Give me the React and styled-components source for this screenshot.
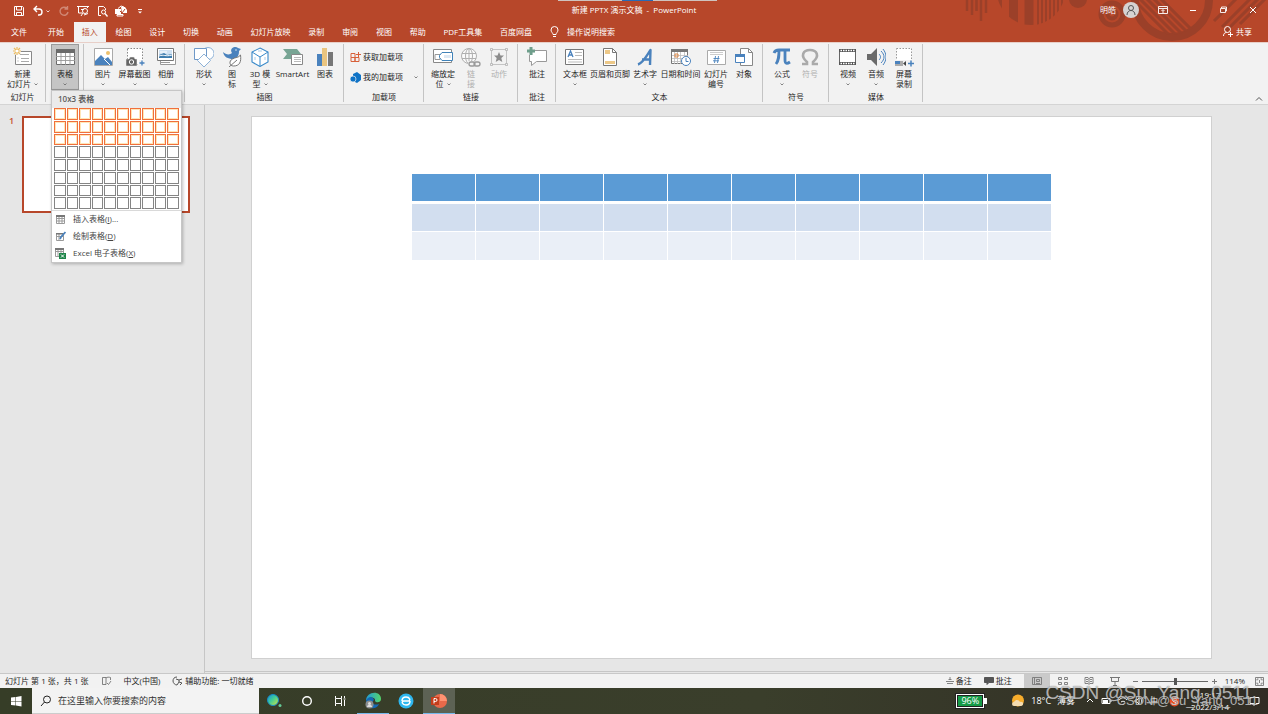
import React, { useState } from 'react';
import styled, { createGlobalStyle, css } from 'styled-components';

const GlobalStyle = createGlobalStyle`
  * { box-sizing: border-box; }
  body { margin: 0; font-family: "Open Sans", "Noto Sans CJK SC", sans-serif; font-size: 8px; line-height: 10px; color: #262626; }
  button, input { font: inherit; color: inherit; }
  button { border: none; background: none; padding: 0; cursor: pointer; }
  svg { display: block; flex: none; }
`;

const Window = styled.div` position: relative; min-height: 100vh; display: flex; flex-direction: column; background: #e6e6e6; overflow: hidden; `;

/* title bar and tabs */
const Header = styled.header` position: relative; background: #b7472a; color: #fff; `;
const Artwork = styled.svg` position: absolute; right: 0; top: 0; `;
const TopStrip = styled.div`
  position: absolute; top: 0; left: 44%; width: 159px; height: 1px;
  background: linear-gradient(to right, #cfc3be 40%, #2a6ab5 40%, #2a6ab5 60%, #cfc3be 60%);
`;
const TitleBar = styled.div` position: relative; display: grid; grid-template-columns: 1fr auto 1fr; align-items: center; height: 21px; `;
const QuickAccess = styled.div` display: flex; align-items: center; gap: 6px; padding: 1px 0 0 12px; `;
const IconButton = styled.button` display: flex; align-items: center; opacity: ${({ $faded }) => ($faded ? 0.35 : 1)}; `;
const UndoPair = styled.div` display: flex; align-items: center; gap: 2px; margin-right: 2px; `;
const Title = styled.h1` margin: 0; font-size: 8px; font-weight: 400; line-height: 18px; padding-bottom: 2px; white-space: pre; `;
const Account = styled.div` display: flex; justify-content: flex-end; align-items: center; gap: 18px; padding: 0 9px 2px 0; `;
const User = styled.button` display: flex; align-items: center; gap: 7px; `;
const WindowButtons = styled.div` display: flex; gap: 18px; `;
const TabBar = styled.div` position: relative; display: flex; align-items: stretch; height: 21px; line-height: 20px; `;
const FileTab = styled.button` padding: 0 11px; line-height: 20px; `;
const Tabs = styled.nav` display: flex; justify-content: space-between; width: 500px; margin-left: 2px; padding-top: 1px; `;
const Tab = styled.button`
  padding: 0 8px; line-height: 18px; white-space: nowrap;
  ${({ $active }) => $active && css` background: #f2f2f2; color: #b7472a; `}
`;
const TellMe = styled.button` display: flex; align-items: center; gap: 8px; margin-left: 10px; `;
const Share = styled.button` display: flex; align-items: center; gap: 3px; margin-left: auto; padding-right: 16px; `;

/* ribbon */
const Ribbon = styled.div`
  position: relative; z-index: 2; display: flex; background: #f2f2f2; padding: 1px 0 2px;
  border-top: 1px solid #e8cfc8; border-bottom: 1px solid #d4d4d4;
`;
const Group = styled.section`
  display: flex; flex-direction: column; padding: ${({ $flush }) => ($flush ? 0 : '0 4px 0 5px')};
  border-right: 1px solid #c4c4c4;
`;
const Tools = styled.div` display: flex; height: 46px; `;
const GroupLabel = styled.div` height: 10px; margin-top: 2px; text-align: center; white-space: nowrap; `;
const ToolWrap = styled.div` position: relative; display: flex; `;
const ToolButton = styled.button`
  display: flex; flex-direction: column; align-items: center; gap: 2px; height: 46px;
  width: ${({ $width }) => $width || 28}px; padding-top: 3px; white-space: nowrap; line-height: 10px;
  color: ${({ disabled }) => (disabled ? '#b0b0b0' : '#262626')};
  ${({ $active }) => $active && css` background: #c5c5c5; box-shadow: inset 0 0 0 1px #9a9a9a; `}
`;
const ToolText = styled.span` display: flex; flex-direction: column; align-items: center; `;
const TextLine = styled.span` display: flex; align-items: center; gap: 3px; height: 10px; `;
const AddIns = styled.div` display: flex; flex-direction: column; gap: 10px; width: 70px; padding: 8px 1px 0; `;
const AddIn = styled.button` display: flex; align-items: center; gap: 2px; height: 10px; white-space: nowrap; `;
const AddInArrow = styled.span` margin-left: auto; `;
const Collapse = styled.button` align-self: flex-end; margin-left: auto; padding-right: 5px; `;

/* table drop-down */
const Menu = styled.div`
  position: absolute; z-index: 5; left: 0; top: 100%; width: 131px; background: #fff;
  border: 1px solid #c6c6c6; box-shadow: 1px 1px 3px rgba(0, 0, 0, 0.25);
`;
const MenuTitle = styled.div` height: 17px; padding-left: 6px; line-height: 15px; background: #ebebeb; color: #5c5c5c; font-weight: 600; `;
const SizeGrid = styled.div` display: grid; grid-template-columns: repeat(10, 1fr); grid-auto-rows: 1fr; gap: 1px; height: 101px; margin: 0 2px 1px; `;
const SizeCell = styled.button`
  border: 1px solid ${({ $on }) => ($on ? '#f0703c' : '#858585')};
  box-shadow: ${({ $on }) => ($on ? 'inset 0 0 0 1px #ffe6b8' : 'none')};
`;
const MenuList = styled.div` border-top: 1px solid #d9d9d9; `;
const MenuItem = styled.button` display: flex; align-items: center; gap: 7px; width: 100%; height: 17px; padding: 0 0 1px 3px; color: #444; `;

/* workspace */
const Workspace = styled.main` flex: 1; display: flex; `;
const Thumbnails = styled.aside` display: flex; align-items: flex-start; width: 205px; padding: 11px 14px 0 9px; border-right: 1px solid #c6c6c6; `;
const SlideNumber = styled.span` width: 13px; font-size: 9px; font-weight: 600; color: #c8502f; `;
const Thumbnail = styled.button` flex: 1; aspect-ratio: 168 / 97; background: #fff; border: 2px solid #b7472a; `;
const Editor = styled.section` flex: 1; padding: 11px 56px 12px 46px; margin-bottom: 1px; border-bottom: 1px solid #c6c6c6; `;
const Slide = styled.article` aspect-ratio: 961 / 543; padding-top: 56px; background: #fff; border: 1px solid #d0d0d0; `;
const SlideTable = styled.table`
  width: 641px; max-width: 90%; margin: 0 auto; border-collapse: collapse; table-layout: fixed;
  th, td { height: 29px; padding: 0; border: 1px solid #fff; }
  th { background: #5b9bd5; border-bottom-width: 3px; }
  td { background: #eaeff7; }
  tr:first-child td { background: #d2deef; }
`;

/* status bar */
const StatusBar = styled.footer` display: flex; justify-content: space-between; height: 15px; background: #f2f2f2; border-top: 1px solid #c8c8c8; `;
const StatusSide = styled.div` display: flex; align-items: center; gap: 12px; padding: 0 4px 0 5px; white-space: nowrap; `;
const StatusButton = styled.button` display: flex; align-items: center; gap: 2px; `;
const ViewTools = styled.div` display: flex; align-self: stretch; gap: 5px; `;
const Views = styled.div` display: flex; `;
const ViewButton = styled.button` display: flex; align-items: center; justify-content: center; width: 26px; background: ${({ $active }) => ($active ? '#cacaca' : 'transparent')}; `;
const Zoom = styled.div` display: flex; align-items: center; gap: 4px; `;
const ZoomRange = styled.input`
  appearance: none; width: 66px; height: 9px; margin: 0; background: linear-gradient(#666, #666) center / 100% 1px no-repeat;
  &::-webkit-slider-thumb { appearance: none; width: 3px; height: 7px; background: #555; }
`;
const ZoomValue = styled.output` margin: 0 6px 0 4px; `;

/* taskbar */
const Taskbar = styled.footer` display: flex; align-items: stretch; height: 26px; background: linear-gradient(to right, #363d27, #3a3e2b 60%, #312d25); color: #fff; `;
const StartButton = styled.button` display: flex; align-items: center; justify-content: center; width: 32px; `;
const SearchBox = styled.label` display: flex; align-items: center; gap: 7px; width: 227px; padding-left: 8px; background: #f3f3f3; border-bottom: 1px solid #ccc; color: #222; `;
const SearchInput = styled.input`
  flex: 1; min-width: 0; padding: 0; border: none; outline: none; background: transparent; font-size: 9px;
  &::placeholder { color: #333; opacity: 1; }
`;
const Pinned = styled.div` display: flex; gap: 1px; margin-left: -1px; `;
const TaskButton = styled.button`
  display: flex; align-items: center; justify-content: center; width: 32px;
  background: ${({ $active }) => ($active ? '#5d6254' : 'transparent')};
  border-bottom: 1px solid ${({ $open }) => ($open ? '#76b9ed' : 'transparent')};
`;
const Tray = styled.div` display: flex; align-items: center; gap: 6px; margin-left: auto; padding-right: 8px; white-space: nowrap; `;
const Battery = styled.div`
  position: relative; width: 28px; height: 14px; margin-right: 21px; border: 1px solid #fff; line-height: 10px;
  outline: 1px solid #222; background: #169b48; box-shadow: inset 0 0 0 1px #222; text-align: center; font-size: 9px; padding-top: 1px;
  &::after { content: ''; position: absolute; right: -4px; top: 3px; width: 3px; height: 6px; background: #fff; }
`;
const Weather = styled.div` display: flex; align-items: center; gap: 6px; margin-right: 4px; font-size: 9px; `;
const InputMode = styled.button` margin-right: 5px; `;
const Clock = styled.time` display: flex; flex-direction: column; align-items: center; line-height: 12px; margin: 0 14px 0 5px; `;
const Watermark = styled.div`
  position: absolute; z-index: 6; right: ${({ $small }) => ($small ? 10 : 16)}px; bottom: ${({ $small }) => ($small ? 5 : 10)}px;
  font-family: "Liberation Sans", Arial, sans-serif; font-size: ${({ $small }) => ($small ? 13 : 19)}px;
  line-height: ${({ $small }) => ($small ? 16 : 22)}px; color: rgba(255, 255, 255, 0.62); pointer-events: none;
  text-shadow: 0 0 1px rgba(60, 60, 60, 0.8);
`;

const G = '#6b6b6b';
const B = '#4a82bd';

const Svg = ({ w = 20, h = w, box = `0 0 ${w} ${h}`, children }) => (
  <svg width={w} height={h} viewBox={box} fill="none" stroke="currentColor" aria-hidden="true">{children}</svg>
);

const Arrow = () => (
  <Svg w={4} h={3}><path d="M.5.5 2 2 3.5.5" stroke="#666" strokeWidth=".8" /></Svg>
);

const icons = {
  newSlide: <Svg><path d="M2.500 4.500H18.500V17.500H2.500Z" fill="#fff" stroke="#888" /><path d="M7 7.500h9M8 11.500h8M8 14.500h8" stroke="#aaa" /><path d="M5 10.500v1M5 13.500v1" stroke="#999" /><circle cx="4" cy="4" r="4" fill="#f2f2f2" stroke="none" /><path d="M4 0v8M0 4h8M1 1l6 6M7 1 1 7" stroke="#edbc5e" strokeWidth="1.200" /><circle cx="4" cy="4" r="1.600" fill="#fff" stroke="none" /></Svg>,
  table: <Svg><path d="M1.500 2.500h18v15h-18Z" fill="#fff" stroke={G} /><path d="M1 2h19v4H1Z" fill={G} stroke="none" /><path d="M1 9.500h19M1 13.500h19M6 6v12M10.500 6v12M15 6v12" stroke="#999" strokeWidth=".9" /></Svg>,
  picture: <Svg><path d="M1.500 1.500h18v17h-18Z" fill="#fff" stroke="#aaa" /><circle cx="15" cy="6" r="2" fill="#edc16d" stroke="none" /><path d="M2 18v-4l6-6 10 10ZM12 12l3-2 4 5v3h-2Z" fill={B} stroke="none" /><path d="m11 12 6 6" stroke="#fff" /></Svg>,
  screenshot: <Svg><path d="M2.500 1.500h15v16h-15Z" fill="#fff" stroke="#888" strokeDasharray="1.500 1.500" /><path d="M1 12h3l1-2h4l1 2h2v7H1Z" fill="#666" stroke="#f2f2f2" strokeWidth=".5" /><circle cx="6.500" cy="15" r="2.200" stroke="#fff" /><path d="M14 13h6v7h-6Z" fill="#f2f2f2" stroke="none" /><path d="M17 13.500v5M14.500 16h5" stroke={B} strokeWidth="1.300" /></Svg>,
  album: <Svg><path d="M4.500 5.500h15v12h-15Z" fill="#fff" stroke="#999" /><path d="M1.500 1.500h16v12h-16Z" fill="#fff" stroke="#777" /><path d="M3 3h13v8H3Z" fill="#cfe1f2" stroke="none" /><path d="M3 11V8l5-2 3 2 5-1v4Z" fill="#3d7cae" stroke="none" /><path d="M4 5h7M3 9c5-2 6 1 13-1" stroke="#fff" /><path d="M4 15.500h10" stroke="#999" /></Svg>,
  shapes: <Svg><circle cx="14" cy="6.500" r="6" stroke="#8db1d7" fill="#fff" /><path d="M.5 1.500h12v11H.5Z" fill="#fff" stroke="#6f99c8" /><path d="m10 7 6.500 6.500L10 20l-6.500-6.500Z" fill="#fff" stroke="#8db1d7" /></Svg>,
  bird: <Svg><path d="M1 5c3 3 7 3 9 1-3-4 2-8 6-5l3 1-2 2c0 4-1 7-6 8-5 0-9-2-10-7Z" fill={B} stroke="none" /><circle cx="14" cy="3" r=".7" fill="#fff" stroke="none" /><path d="M18.500 8c1 7-1 11-7 11-4 0-5-5-1-7 3-2 6-1 8-4Z" fill="#fff" stroke="#777" /><path d="m7 20 8-7" stroke="#777" /></Svg>,
  cube: <Svg><path d="m10 1 8 4v10l-8 4.500L2 15V5Z" fill="#fff" stroke="#3889c9" strokeWidth="1.100" /><path d="m2 5 8 5 8-5M10 10v9" stroke="#3889c9" /><path d="m5 10 0 3M15 10v3M8 4l4 0" stroke="#a9cde9" /></Svg>,
  smartArt: <Svg><path d="M0 2h14l4 5-4 5H0l4-5Z" fill="#78a594" stroke="none" /><path d="M8.500 7.500h11v10h-11Z" fill="#fff" stroke="#888" /><path d="M11 10.500h7M11 12.500h7M11 14.500h7" stroke="#bbb" /></Svg>,
  chart: <Svg><path d="M2 7h5v12H2Z" fill={B} stroke="none" /><path d="M7 1h5v18H7Z" fill="#eac580" stroke="none" /><path d="M13 5h5v14h-5Z" fill="#777" stroke="none" /></Svg>,
  zoomTo: <Svg><path d="M.5 2.500h18v13H.5Z" fill="#fff" stroke="#888" /><path d="M2 7.500h5v5H2Z" stroke="#999" /><path d="M9 5.500h10.500v8H9L6.500 10.500v-2Z" fill="#fff" stroke="#4083b9" /><path d="M11 8h7v3h-7Z" fill="#dce8f3" stroke="none" /></Svg>,
  link: <Svg><circle cx="8" cy="9" r="7.500" fill="#fafafa" /><ellipse cx="8" cy="9" rx="3.500" ry="7.500" /><path d="M1 6.500h14M1 11.500h14M8 2v14" /><path d="M7 14h13v6H7Z" fill="#f2f2f2" stroke="none" /><rect x="8" y="15" width="6" height="4" rx="2" strokeWidth="1.300" stroke="#999" /><rect x="13" y="15" width="6" height="4" rx="2" strokeWidth="1.300" stroke="#999" /></Svg>,
  action: <Svg><path d="M2.500 2.500h15v15h-15Z" stroke="#c4c4c4" /><path d="M1.500 1.500h2v2h-2ZM16.500 1.500h2v2h-2ZM1.500 16.500h2v2h-2ZM16.500 16.500h2v2h-2Z" fill="#f2f2f2" stroke="#aaa" strokeWidth=".7" /><path d="m10 5 1.500 3.500h3.500l-2.700 2.500 1 4-3.300-2-3.300 2 1-4L5 8.500h3.500Z" fill="#8c8c8c" stroke="none" /></Svg>,
  comment: <Svg><path d="M2.500 3.500h17v11h-10l-5 4v-4h-2Z" fill="#fff" stroke="#999" /><path d="M4 0v8M0 4h8" stroke="#f2f2f2" strokeWidth="4" /><path d="M4 0v8M0 4h8" stroke="#6e9e8b" strokeWidth="3" /></Svg>,
  textBox: <Svg><path d="M.5 2.500h18v15H.5Z" fill="#fff" stroke="#777" /><path d="m3 10 2.500-6L8 10M4 8h3" stroke={B} strokeWidth="1.300" /><path d="M10 5.500h7M10 8.500h7M3 12.500h14M3 15h14" stroke="#bbb" /></Svg>,
  headerFooter: <Svg><path d="M3.500 1.500h9l4 4v13h-13Z" fill="#fff" stroke="#777" /><path d="M12.500 1.500v4h4" stroke="#777" /><path d="M5 3h5v4H5ZM5 14h10v3H5Z" fill="#edc887" stroke="none" /></Svg>,
  wordArt: <Svg><path d="M3 17.500C8 16 12 8 15.500 3L15 18M7 12.500h9" stroke={B} strokeWidth="2.400" strokeLinejoin="round" /></Svg>,
  dateTime: <Svg><path d="M.5 2.500h16v14H.5Z" fill="#fff" stroke="#777" /><path d="M0 2h17v3H0Z" fill="#777" stroke="none" /><path d="M1 8.500h16M1 11.500h16M1 14.500h16M3.500 5v12M6.500 5v12M9.500 5v12M13.500 5v12" stroke="#bbb" strokeWidth=".8" /><path d="M4 7h3v3H4Z" stroke="#e08a49" /><circle cx="15" cy="14" r="4.500" fill="#fff" stroke={B} /><path d="M15 11v3.500h2.500" stroke={B} /></Svg>,
  slideNumber: <Svg><path d="M1.500 3.500h18v14h-18Z" fill="#fff" stroke="#aaa" /><path d="M4 5.500h13M4 7.500h13" stroke="#ccc" /><path d="m9.500 9-1 7M12.500 9l-1 7M7.500 11.500h6M7 13.800h6" stroke={B} strokeWidth=".9" /></Svg>,
  object: <Svg><path d="M6.500 1.500h8l4 4v13h-12Z" fill="#fff" stroke="#888" /><path d="M14.500 1.500v4h4" stroke="#888" /><path d="M1.500 7.500h9v8h-9Z" fill="#fff" stroke={B} /><path d="M1 7h10v3H1Z" fill={B} stroke="none" /></Svg>,
  formula: <Svg><path d="M2 6c1-3 3-3 5-3h11M7 3c0 6 0 10-3 14M13 3v10c0 4 2 4 5 2" stroke={B} strokeWidth="2.800" /></Svg>,
  symbol: <Svg><path d="M2 17h5v-2C0 9 3 3 10 3s10 6 3 12v2h5" stroke="#aaa" strokeWidth="2.600" /></Svg>,
  video: <Svg><path d="M1.500 2.500h16v15h-16Z" fill="#fff" stroke="#666" /><path d="M1 3.500h17M1 16.500h17" stroke="#555" strokeWidth="3" /><path d="M2.500 3.500h14M2.500 16.500h14" stroke="#fff" strokeWidth="1.500" strokeDasharray="1.500 1" /></Svg>,
  audio: <Svg><path d="M1 7h4l6-6v18l-6-6H1Z" fill="#6a6a6a" stroke="none" /><path d="M13 7c2 2 2 4 0 6M15 4c4 4 4 8 0 12M17 2c4 5 4 11 0 16" stroke={B} /></Svg>,
  record: <Svg><path d="M2.500 1.500h15v14h-15Z" fill="#fff" stroke="#999" strokeDasharray="1.500 1.500" /><path d="M0 13h20v7H0Z" fill="#f2f2f2" stroke="none" /><path d="M1 14h8v5H1Z" fill="#aaa" stroke="none" /><path d="M1 14h5v3H1Z" fill={B} stroke="none" /><path d="m9 16.500 3-2.500v5Z" fill="#444" stroke="none" /><path d="M17 13.500v6M14 16.500h6" stroke={B} strokeWidth="1.500" /></Svg>,
};

const tabs = ['开始', '插入', '绘图', '设计', '切换', '动画', '幻灯片放映', '录制', '审阅', '视图', '帮助', 'PDF工具集', '百度网盘'];
const columns = Array.from({ length: 10 }, (_, i) => i);

const groupsAfterTable = [
  { id: 'images', label: '', tools: [
    { icon: 'picture', lines: ['图片'], arrow: true },
    { icon: 'screenshot', lines: ['屏幕截图'], arrow: true, width: 35 },
    { icon: 'album', lines: ['相册'], arrow: true },
  ] },
  { id: 'illustrations', label: '插图', tools: [
    { icon: 'shapes', lines: ['形状'], arrow: true },
    { icon: 'bird', lines: ['图', '标'] },
    { icon: 'cube', lines: ['3D 模', '型'], arrow: true },
    { icon: 'smartArt', lines: ['SmartArt'], width: 37 },
    { icon: 'chart', lines: ['图表'] },
  ] },
  { id: 'addins', label: '加载项' },
  { id: 'links', label: '链接', tools: [
    { icon: 'zoomTo', lines: ['缩放定', '位'], arrow: true },
    { icon: 'link', lines: ['链', '接'], disabled: true },
    { icon: 'action', lines: ['动作'], disabled: true },
  ] },
  { id: 'comments', label: '批注', tools: [{ icon: 'comment', lines: ['批注'] }] },
  { id: 'text', label: '文本', tools: [
    { icon: 'textBox', lines: ['文本框'], arrow: true },
    { icon: 'headerFooter', lines: ['页眉和页脚'], width: 42 },
    { icon: 'wordArt', lines: ['艺术字'], arrow: true },
    { icon: 'dateTime', lines: ['日期和时间'], width: 43 },
    { icon: 'slideNumber', lines: ['幻灯片', '编号'] },
    { icon: 'object', lines: ['对象'] },
  ] },
  { id: 'symbols', label: '符号', tools: [
    { icon: 'formula', lines: ['公式'], arrow: true },
    { icon: 'symbol', lines: ['符号'], disabled: true },
  ] },
  { id: 'media', label: '媒体', tools: [
    { icon: 'video', lines: ['视频'], arrow: true },
    { icon: 'audio', lines: ['音频'], arrow: true },
    { icon: 'record', lines: ['屏幕', '录制'] },
  ] },
];

const Tool = ({ icon, lines, arrow, width, disabled, active, onClick }) => (
  <ToolButton $width={width} $active={active} disabled={disabled} onClick={onClick}>
    {icons[icon]}
    <ToolText>
      {lines.map((line, i) => (
        <TextLine key={line}>
          {line}
          {arrow && lines.length > 1 && i === lines.length - 1 && <Arrow />}
        </TextLine>
      ))}
      {arrow && lines.length === 1 && <TextLine><Arrow /></TextLine>}
    </ToolText>
  </ToolButton>
);

const AddInTools = () => (
  <AddIns>
    <AddIn>
      <Svg w={11}><path d="M1 1.500h4v4H1ZM1 5.500h4v4H1ZM5 5.500h4v4H5Z" stroke="#d8603a" /><path d="M8.500 0v5M6 2.500h5" stroke="#d8603a" /></Svg>
      获取加载项
    </AddIn>
    <AddIn>
      <Svg w={11}><path d="M3 2 7 0l4 3v5L7 11 3 9Z" fill="#0f73c6" stroke="none" /><circle cx="3" cy="7" r="3" fill="#0f73c6" stroke="#f2f2f2" strokeWidth=".7" /></Svg>
      我的加载项
      <AddInArrow><Arrow /></AddInArrow>
    </AddIn>
  </AddIns>
);

const TableMenu = () => {
  const [size, setSize] = useState({ cols: 10, rows: 3 });
  const cells = Array.from({ length: 80 }, (_, i) => ({ col: (i % 10) + 1, row: Math.floor(i / 10) + 1 }));
  return (
    <Menu>
      <MenuTitle>{size.cols}x{size.rows} 表格</MenuTitle>
      <SizeGrid>
        {cells.map(({ col, row }) => (
          <SizeCell
            key={`${col}-${row}`}
            aria-label={`${col}x${row}`}
            $on={col <= size.cols && row <= size.rows}
            onClick={() => setSize({ cols: col, rows: row })}
          />
        ))}
      </SizeGrid>
      <MenuList>
        <MenuItem>
          <Svg w={11}><path d="M1.500 1.500h8v8h-8ZM1 4.500h9M1 7h9M4 2v8M7 2v8" stroke="#999" fill="#fff" /><path d="M1 1h9v2H1Z" fill="#777" stroke="none" /></Svg>
          <span>插入表格(<u>I</u>)...</span>
        </MenuItem>
        <MenuItem>
          <Svg w={11}><path d="M1.500 2.500h7v7h-7ZM1 5.500h8M4 2v8" stroke="#999" fill="#fff" /><path d="M1 2h7v1.500H1Z" fill="#777" stroke="none" /><path d="M10.500 1 6 6l-1 2" stroke={B} strokeWidth="1.800" /></Svg>
          <span>绘制表格(<u>D</u>)</span>
        </MenuItem>
        <MenuItem>
          <Svg w={11}><path d="M.5.500h8v8h-8ZM0 3.500h9M3 1v8M6 1v8" stroke="#999" fill="#fff" /><path d="M0 0h9v2H0Z" fill="#777" stroke="none" /><path d="M4 5h7v6H4Z" fill="#1e8449" stroke="none" /><path d="m6 6.500 3 3M9 6.500l-3 3" stroke="#fff" /></Svg>
          <span>Excel 电子表格(<u>X</u>)</span>
        </MenuItem>
      </MenuList>
    </Menu>
  );
};

const HeaderArt = () => (
  <Artwork width="308" height="42" viewBox="0 0 308 42" fill="none" stroke="#9b4029" aria-hidden="true">
    <clipPath id="disc"><circle cx="71" cy="-9" r="34" /></clipPath>
    <clipPath id="ring"><circle cx="212" cy="0" r="35" /></clipPath>
    <path d="M7 0v11M12 0v15M16.500 0v11M21 0v21M26 0v13" strokeWidth="2.500" />
    <g clipPath="url(#disc)">
      <path d="M39.500 0v26" strokeWidth="5" />
      <path d="M53.500 0v26M69 0v26" strokeWidth="9" />
      <path d="M78 0v26M82 0v26M86 0v26M90 0v26M94 0v26M98 0v26M102 0v26" strokeWidth="2" />
    </g>
    <circle cx="118" cy="-1" r="9" fill="#9b4029" stroke="none" />
    <circle cx="152" cy="14" r="11" strokeWidth="5" />
    <circle cx="152" cy="14" r="4.500" strokeWidth="4" />
    <circle cx="212" cy="0" r="37" strokeWidth="8" />
    <g clipPath="url(#ring)" strokeWidth="3">
      <path d="m170-4 40 40M177-4l40 40M184-4l40 40M191-4l40 40M198-4l40 40" />
    </g>
    <path d="m262 27 30-30M266 31l35-35M280 24l28-28M254 21l24-24" strokeWidth="3" />
  </Artwork>
);

const App = () => {
  const [menuOpen, setMenuOpen] = useState(true);
  const [activeTab, setActiveTab] = useState('插入');
  const [zoom, setZoom] = useState(114);

  return (
    <Window>
      <GlobalStyle />
      <Header>
        <HeaderArt />
        <TopStrip />
        <TitleBar>
          <QuickAccess>
            <IconButton aria-label="保存"><Svg w={14} h={12}><path d="M2.500 1.500h8l1 1v8h-9ZM4.500 2v3h5V2M4.500 10.500V7.500h5v3" /></Svg></IconButton>
            <UndoPair>
              <IconButton aria-label="撤消"><Svg w={12}><path d="M5 1 2 4l3 3M2 4h5a3 3 0 0 1 0 6H6" strokeWidth="1.400" /></Svg></IconButton>
              <Svg w={4} h={3}><path d="M.5.500 2 2 3.500.500" strokeWidth=".8" /></Svg>
            </UndoPair>
            <IconButton $faded aria-label="恢复"><Svg w={12}><path d="M9 3.500A4 4 0 1 0 10 7M9.500 1v3h-3" strokeWidth="1.400" /></Svg></IconButton>
            <IconButton aria-label="从头开始"><Svg w={14} h={12}><path d="M1 1.500h12M2.500 2v6h4M5 11l2-3M5 4.500h3M11.500 2v1" /><circle cx="9" cy="6" r="2.500" /><path d="m8 10 4-1.500" /></Svg></IconButton>
            <IconButton aria-label="打印预览"><Svg w={12}><path d="M5 10.500H2.500v-9h5l2 2V5" /><circle cx="7.500" cy="7" r="2" /><path d="m9 8.500 2.500 3" strokeWidth="1.300" /></Svg></IconButton>
            <IconButton aria-label="快速打印"><Svg w={14} h={12}><path d="M1 4h6v5H1ZM7 2h4l2 3v3H8Z" fill="currentColor" stroke="none" /><path d="M4 3.500 7 1l3 1M3 9.500h6V11H3Z" /><path d="m6 6 2 2 3-4" stroke="#b7472a" /></Svg></IconButton>
            <IconButton aria-label="自定义"><Svg w={12}><path d="M4 4.500h4" /><path d="M4 6.500h4L6 8.500Z" fill="currentColor" stroke="none" /></Svg></IconButton>
          </QuickAccess>
          <Title>新建 PPTX 演示文稿  -  PowerPoint</Title>
          <Account>
            <User>
              明皓
              <Svg w={16}><circle cx="8" cy="8" r="8" fill="#d6d3d2" stroke="none" /><circle cx="8" cy="6" r="2.500" stroke="#555" /><path d="M4 13c0-6 8-6 8 0" stroke="#555" /></Svg>
            </User>
            <WindowButtons>
              <IconButton aria-label="功能区显示选项"><Svg w={12}><path d="M1.500 2.500h9v7h-9ZM2 4.500h8M6 9V6M4.500 7 6 5.500 7.500 7" strokeWidth=".9" /></Svg></IconButton>
              <IconButton aria-label="最小化"><Svg w={12}><path d="M3 6.500h6" /></Svg></IconButton>
              <IconButton aria-label="还原"><Svg w={12}><path d="M3.500 4.500h5v4h-5ZM4.500 4V3h5v4h-1" strokeWidth=".9" /></Svg></IconButton>
              <IconButton aria-label="关闭"><Svg w={12}><path d="m3 3 6 6M9 3 3 9" /></Svg></IconButton>
            </WindowButtons>
          </Account>
        </TitleBar>
        <TabBar>
          <FileTab>文件</FileTab>
          <Tabs>
            {tabs.map((tab) => (
              <Tab key={tab} $active={tab === activeTab} onClick={() => setActiveTab(tab)}>{tab}</Tab>
            ))}
          </Tabs>
          <TellMe>
            <Svg w={9} h={12}><path d="M3 8.500C3 7 1 6 1 4a3.500 3.500 0 0 1 7 0c0 2-2 3-2 4.500ZM3 10.500h3" /></Svg>
            操作说明搜索
          </TellMe>
          <Share>
            <Svg w={10} h={11}><circle cx="4.500" cy="3.500" r="3" /><path d="M.5 10c0-2 1-3.500 3-3.500M7.500 6v5M5 8.500h5" /></Svg>
            共享
          </Share>
        </TabBar>
      </Header>

      <Ribbon>
        <Group $flush>
          <Tools><Tool icon="newSlide" lines={['新建', '幻灯片']} arrow width={45} /></Tools>
          <GroupLabel>幻灯片</GroupLabel>
        </Group>
        <Group>
          <Tools>
            <ToolWrap>
              <Tool icon="table" lines={['表格']} arrow active={menuOpen} onClick={() => setMenuOpen(!menuOpen)} />
              {menuOpen && <TableMenu />}
            </ToolWrap>
          </Tools>
        </Group>
        {groupsAfterTable.map((group) => (
          <Group key={group.id}>
            <Tools>
              {group.tools ? group.tools.map((tool) => <Tool key={tool.icon} {...tool} />) : <AddInTools />}
            </Tools>
            <GroupLabel>{group.label}</GroupLabel>
          </Group>
        ))}
        <Collapse aria-label="折叠功能区"><Svg w={8} h={6}><path d="m1 4.500 3-3 3 3" stroke="#555" /></Svg></Collapse>
      </Ribbon>

      <Workspace>
        <Thumbnails>
          <SlideNumber>1</SlideNumber>
          <Thumbnail aria-label="幻灯片 1" />
        </Thumbnails>
        <Editor>
          <Slide>
            <SlideTable>
              <thead>
                <tr>{columns.map((c) => <th key={c} />)}</tr>
              </thead>
              <tbody>
                {[1, 2].map((row) => (
                  <tr key={row}>{columns.map((c) => <td key={c} />)}</tr>
                ))}
              </tbody>
            </SlideTable>
          </Slide>
        </Editor>
      </Workspace>

      <StatusBar>
        <StatusSide>
          <span>幻灯片 第 1 张，共 1 张</span>
          <Svg w={11} h={10}><path d="M5 8.500H1.500v-7H5V8ZM5 2c1-1 3-1 4.500-.5V4M6 7l1.500 1.500L10 5" stroke="#666" strokeWidth=".8" /></Svg>
          <span>中文(中国)</span>
          <StatusButton>
            <Svg w={11} h={10}><path d="M5 1C2 1 1 3 1 5s2 4 4 4M4 3l3 1 3-1M7 4v2L5 9M7 6l3 1-2 2" stroke="#555" /></Svg>
            辅助功能: 一切就绪
          </StatusButton>
        </StatusSide>
        <StatusSide>
          <StatusButton><Svg w={8} h={8}><path d="M0 4.500h8M1 6.500h6M4 0v3M2.500 2.500h3" stroke="#777" strokeWidth=".9" /></Svg>备注</StatusButton>
          <StatusButton><Svg w={10}><path d="M.5 1.500h9v5H5l-2 2v-2H.5Z" fill="#555" stroke="#555" /></Svg>批注</StatusButton>
          <ViewTools>
            <Views>
              <ViewButton $active aria-label="普通视图"><Svg w={10}><path d="M.5 1.500h9v7h-9ZM2.500 2v6M4.500 3.500h3v2h-3ZM4 7.500h4" stroke="#777" strokeWidth=".9" /></Svg></ViewButton>
              <ViewButton aria-label="幻灯片浏览"><Svg w={10}><path d="M.5 1.500h3v2h-3ZM6.500 1.500h3v2h-3ZM.5 6.500h3v2h-3ZM6.500 6.500h3v2h-3Z" stroke="#777" strokeWidth=".9" /></Svg></ViewButton>
              <ViewButton aria-label="阅读视图"><Svg w={10}><path d="M1 1.500h3l1 1 1-1h3v6H6l-1 1-1-1H1ZM5 2v6M2 3.500h2M2 5.500h2M6 3.500h2M6 5.500h2" stroke="#777" strokeWidth=".9" /></Svg></ViewButton>
              <ViewButton aria-label="幻灯片放映"><Svg w={10}><path d="M0 1.500h10M1.500 2v3.500h7V2M5 6v3M3 9.500h4" stroke="#777" /></Svg></ViewButton>
            </Views>
            <Zoom>
              <IconButton aria-label="缩小"><Svg w={5}><path d="M0 2.500h5" stroke="#777" /></Svg></IconButton>
              <ZoomRange type="range" min="10" max="210" value={zoom} aria-label="缩放" onChange={(e) => setZoom(Number(e.target.value))} />
              <IconButton aria-label="放大"><Svg w={5}><path d="M0 2.500h5M2.500 0v5" stroke="#777" /></Svg></IconButton>
              <ZoomValue>{zoom}%</ZoomValue>
              <IconButton aria-label="适应窗口"><Svg w={9}><path d="M.5.500h8v8h-8ZM2 3.500V2h1.500M5.500 2H7v1.500M7 5.500V7H5.500M3.500 7H2V5.500M4.500 3v3" stroke="#777" strokeWidth=".9" /></Svg></IconButton>
            </Zoom>
          </ViewTools>
        </StatusSide>
      </StatusBar>

      <Taskbar>
        <StartButton aria-label="开始菜单"><Svg w={12}><path d="M1 2.500 5.500 2v4H1ZM6 2l5.500-1v5H6ZM1 6.500h4.500v4L1 10ZM6 6.500h5.500v5L6 10.500Z" fill="#fff" stroke="none" /></Svg></StartButton>
        <SearchBox>
          <Svg w={11} h={12}><circle cx="7" cy="4.500" r="3.500" /><path d="M4.500 7 1 11" /></Svg>
          <SearchInput placeholder="在这里输入你要搜索的内容" aria-label="搜索" />
        </SearchBox>
        <Pinned>
          <TaskButton aria-label="资讯">
            <svg width="16" height="14" viewBox="0 0 16 14">
              <defs><linearGradient id="news" x1="0" x2="1" y1="0" y2="1"><stop stopColor="#128fe0" /><stop offset=".45" stopColor="#40cc97" /><stop offset="1" stopColor="#d7ea3d" /></linearGradient></defs>
              <circle cx="7" cy="6" r="5.500" fill="url(#news)" stroke="#178bc7" /><circle cx="14" cy="11.500" r="1.500" fill="#63c995" />
            </svg>
          </TaskButton>
          <TaskButton aria-label="Cortana"><Svg w={12}><circle cx="6" cy="6" r="4.300" strokeWidth="1.400" /></Svg></TaskButton>
          <TaskButton aria-label="任务视图"><Svg w={12}><path d="M1.500 1v2.500h6V1M1.500 11V8.500h6V11M1.500 3.500v5M7.500 3.500v5M10.500 1v2M10.500 5v6" /><path d="M9.500 4h2" /></Svg></TaskButton>
          <TaskButton $open aria-label="Edge">
            <svg width="17" height="17" viewBox="0 0 17 17">
              <defs><linearGradient id="edge" x1="0" x2="1"><stop stopColor="#209bd8" /><stop offset="1" stopColor="#55d66b" /></linearGradient></defs>
              <path d="M1 9C1-1 16-2 16 7c0 4-5 4-6 2 1-4-6-5-9 0Z" fill="url(#edge)" />
              <path d="M1 9c2-5 7-5 8-1-3 2-1 6 5 4-3 7-13 5-13-3Z" fill="#1469b5" />
              <circle cx="4.500" cy="12.500" r="4" fill="#8b8f91" /><circle cx="4.500" cy="11.500" r="1.500" fill="#ddd" /><path d="M2 15c0-3 5-3 5 0Z" fill="#ddd" />
            </svg>
          </TaskButton>
          <TaskButton aria-label="搜狗浏览器"><Svg w={16}><circle cx="8" cy="8" r="7.500" fill="#2eb7ef" stroke="none" /><path d="M5 8h5c3 0 2-4-2-4-3 0-4 2-4 4M11 8H6c-3 0-2 4 2 4 3 0 4-2 4-4" stroke="#fff" strokeWidth="1.500" /></Svg></TaskButton>
          <TaskButton $open $active aria-label="PowerPoint">
            <svg width="16" height="16" viewBox="0 0 16 16">
              <circle cx="9" cy="8" r="7" fill="#e8694a" /><path d="M9 1a7 7 0 0 1 7 7H9Z" fill="#ff9272" /><path d="M0 4h8v8H0Z" fill="#c43e1c" />
              <path d="M3 10.500v-5h1.500a1.500 1.500 0 0 1 0 3H3" stroke="#fff" fill="none" />
            </svg>
          </TaskButton>
        </Pinned>
        <Tray>
          <Battery>96%</Battery>
          <Weather>
            <svg width="14" height="14" viewBox="0 0 14 14"><circle cx="7" cy="6.500" r="6" fill="#f7ad2c" /><path d="M3 12a2 2 0 0 1 0-4c2-3 5-2 6 0 4-1 4 4 1 4Z" fill="#f4dcb1" /></svg>
            <span>18°C</span>
            <span>薄雾</span>
          </Weather>
          <Svg w={10}><path d="m2 6 3-3 3 3" /></Svg>
          <Svg w={11} h={8}><path d="M1 1.500h8v5H1ZM10 3v2" /><path d="M2 3h5v3H2Z" fill="#fff" stroke="none" /></Svg>
          <Svg w={10}><path d="M1 4c3-3 5-3 8 0M3 6c2-1 2-1 4 0M5 8v1" /></Svg>
          <Svg w={10}><path d="M1 4h2l2-2v6L3 6H1ZM7 3c1 1 1 3 0 4" /></Svg>
          <InputMode>中</InputMode>
          <Svg w={11}><circle cx="5.500" cy="5.500" r="5" fill="#ee4e24" stroke="none" /><path d="M8 3C5 2 3 3 3.500 4.500S7.500 6 7.500 7 5 9 3 8" stroke="#fff" /></Svg>
          <Clock><span>19:17</span><span>2022/3/14</span></Clock>
          <Svg w={11}><path d="M1 1.500h9v6H7l-2 2v-2H1Z" /></Svg>
        </Tray>
      </Taskbar>
      <Watermark>CSDN @Su_Yang_0511</Watermark>
      <Watermark $small>CSDN @Su_Yang_0511</Watermark>
    </Window>
  );
};

export default App;
